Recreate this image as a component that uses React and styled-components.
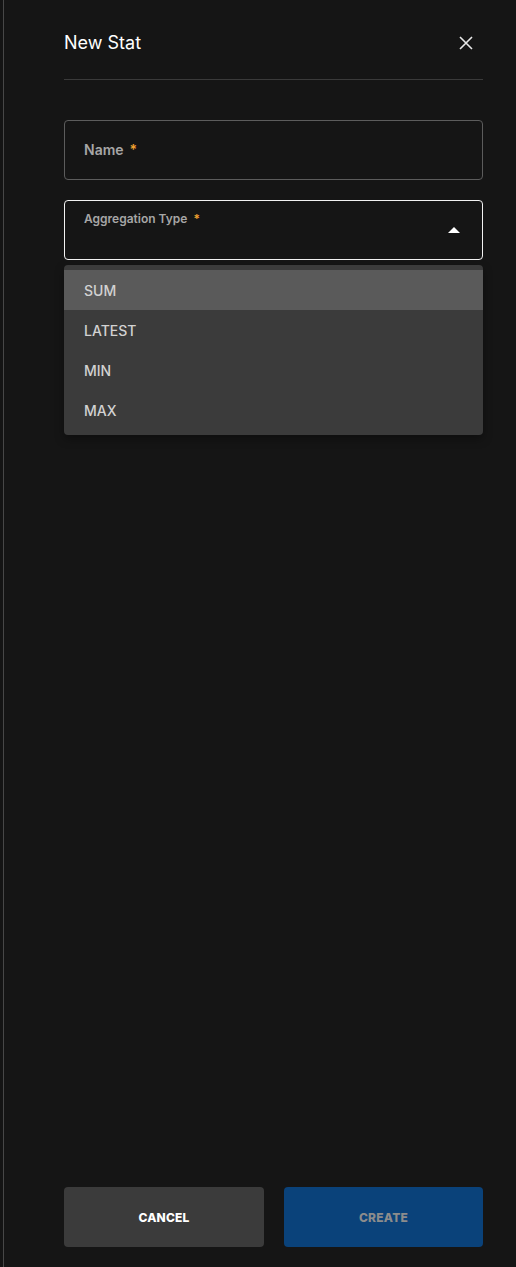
import React from "react";
import styled, { createGlobalStyle } from "styled-components";

const Global = createGlobalStyle`
  html, body { margin: 0; padding: 0; background: #151515; }
  body { font-family: Inter, "Noto Sans", sans-serif; -webkit-font-smoothing: antialiased; }
  * { box-sizing: border-box; }
`;

const Root = styled.div`
  height: 1267px;
  padding-left: 3px;
  background: #141414;
  display: flex;
`;

const Drawer = styled.div`
  flex: 1;
  border-left: 1px solid #474747;
  background: #151515;
  padding: 0 33px 20px 60px;
  display: flex;
  flex-direction: column;
`;

const Header = styled.div`
  height: 80px;
  padding: 28px 0 21px;
  border-bottom: 1px solid #3a3a3a;
  display: flex;
  align-items: center;
  justify-content: space-between;
`;

const Title = styled.h2`
  margin: 0;
  font-size: 18px;
  font-weight: 400;
  color: #ffffff;
  line-height: 30px;
`;

const CloseButton = styled.button`
  width: 24px;
  height: 24px;
  margin-right: 5px;
  padding: 0;
  border: none;
  background: transparent;
  display: flex;
  align-items: center;
  justify-content: center;
  cursor: pointer;
`;

const Form = styled.div`
  margin-top: 40px;
  display: flex;
  flex-direction: column;
  gap: 20px;
`;

const Field = styled.div`
  position: relative;
  height: 60px;
  border: 1px solid ${(p) => (p.$focused ? "#f2f2f2" : "#5c5c5c")};
  border-radius: 4px;
  padding: 0 19px;
  display: flex;
  align-items: ${(p) => (p.$small ? "flex-start" : "center")};
  justify-content: space-between;
`;

const Label = styled.span`
  font-size: ${(p) => (p.$small ? "12px" : "14px")};
  font-weight: 600;
  color: #a6a6a6;
  line-height: 16px;
  margin-top: ${(p) => (p.$small ? "10px" : "0")};
`;

const Star = styled.span`
  color: #f0a030;
  margin-left: 6px;
`;

const Arrow = styled.span`
  align-self: center;
  margin-right: 3px;
  width: 0;
  height: 0;
  border-left: 6px solid transparent;
  border-right: 6px solid transparent;
  border-bottom: 6px solid #ffffff;
`;

const Menu = styled.ul`
  position: absolute;
  top: 64px;
  left: -1px;
  right: -1px;
  margin: 0;
  padding: 5px 0;
  list-style: none;
  background: #3b3b3b;
  border-radius: 4px;
  box-shadow: 0 4px 10px rgba(0, 0, 0, 0.35);
  z-index: 2;
`;

const Item = styled.li`
  height: 40px;
  padding: 0 20px;
  display: flex;
  align-items: center;
  font-size: 14px;
  font-weight: 500;
  color: #d2d2d2;
  background: ${(p) => (p.$active ? "#5a5a5a" : "transparent")};
`;

const Footer = styled.div`
  margin-top: auto;
  display: flex;
  gap: 20px;
`;

const Button = styled.button`
  flex: ${(p) => (p.$primary ? "0 0 199px" : "0 0 200px")};
  height: 60px;
  border: none;
  border-radius: 4px;
  background: ${(p) => (p.$primary ? "#0a427a" : "#3b3b3b")};
  color: ${(p) => (p.$primary ? "#8c8c8c" : "#ffffff")};
  font-family: Inter, "Noto Sans", sans-serif;
  font-size: 12px;
  font-weight: 800;
  letter-spacing: 0.2px;
`;

export default function App() {
  const options = ["SUM", "LATEST", "MIN", "MAX"];
  return (
    <>
      <Global />
      <Root>
        <Drawer>
          <Header>
            <Title>New Stat</Title>
            <CloseButton aria-label="close">
              <svg width="14" height="14" viewBox="0 0 14 14">
                <path d="M1 1L13 13M13 1L1 13" stroke="#e8e8e8" strokeWidth="1.6" />
              </svg>
            </CloseButton>
          </Header>
          <Form>
            <Field>
              <Label>
                Name<Star>*</Star>
              </Label>
            </Field>
            <Field $focused $small>
              <Label $small>
                Aggregation Type<Star>*</Star>
              </Label>
              <Arrow />
              <Menu>
                {options.map((o, i) => (
                  <Item key={o} $active={i === 0}>
                    {o}
                  </Item>
                ))}
              </Menu>
            </Field>
          </Form>
          <Footer>
            <Button>CANCEL</Button>
            <Button $primary>CREATE</Button>
          </Footer>
        </Drawer>
      </Root>
    </>
  );
}
